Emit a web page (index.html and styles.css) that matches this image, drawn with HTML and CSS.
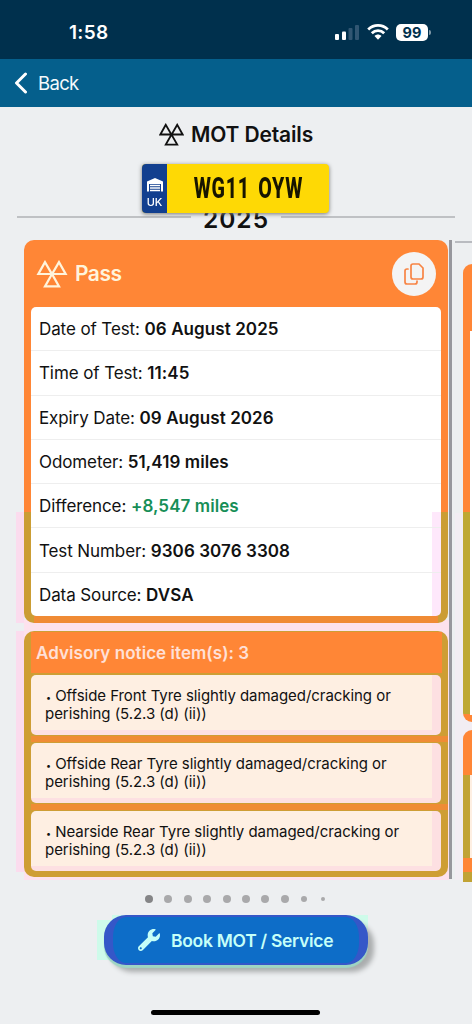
FILE: index.html
```html
<!DOCTYPE html>
<html lang="en">
<head>
<meta charset="utf-8">
<title>MOT Details</title>
<link rel="stylesheet" href="styles.css">
</head>
<body>
<svg class="defs" aria-hidden="true"><symbol id="mot" viewBox="0 0 24 22"><path d="M6.5 1.700 1.300 11H11.900ZM17.500 1.700 12.100 11H22.700ZM12 11 6.500 20.700H17.500Z" fill="none" stroke="currentColor" stroke-width="1.750"/></symbol></svg>
<div class="status">
  <span class="clock">1:58</span>
  <svg class="signal" viewBox="0 0 24 16"><g fill="#fff"><rect x="0" y="10" width="4" height="6" rx="1"/><rect x="7" y="7.500" width="4" height="8.500" rx="1"/></g><g fill="#315672"><rect x="13.500" y="4" width="4" height="12" rx="1"/><rect x="20" y="1" width="4" height="15" rx="1"/></g></svg>
  <svg class="wifi" viewBox="0 0 22 16"><g fill="none" stroke="#fff" stroke-width="2.800"><path d="M1.200 5.500C6.800.1 15.200.1 20.800 5.500"/><path d="M4.800 9.200c3.500-3.500 8.900-3.500 12.400 0"/></g><path d="M7.500 12.100c2-2 5-2 7 0L11 15.800Z" fill="#fff"/></svg>
  <span class="battery">99</span><span class="cap"></span>
</div>
<nav class="nav">
  <svg class="chevron" viewBox="0 0 14 22"><path d="M11.500 2 2.500 11l9 9" fill="none" stroke="#fff" stroke-width="3" stroke-linecap="round" stroke-linejoin="round"/></svg>
  <span>Back</span>
</nav>
<main>
  <h1 class="title"><svg><use href="#mot"/></svg><span>MOT Details</span></h1>
  <div class="plate">
    <div class="band"><svg viewBox="0 0 18 15"><path d="M1 14.500V4.500L9 1l8 3.500v10h-2V7H3v7.500Z" fill="#fff"/><path d="M4 8.500h10M4 11h10M4 13.500h10" stroke="#fff" stroke-width="1.300"/></svg><span>UK</span></div>
    <div class="reg"><span>WG11 OYW</span></div>
  </div>
  <div class="year"><span>2025</span></div>
  <div class="carousel">
    <div class="slide">
      <section class="card result">
        <header class="result-head"><svg><use href="#mot"/></svg><span class="pass">Pass</span>
          <span class="copy"><svg viewBox="0 0 22 24"><path d="M10 2h6l4 4v9q0 2-2 2h-8q-2 0-2-2V4q0-2 2-2Z M5 7H4Q2 7 2 9v11q0 2 2 2h8q2 0 2-2v-1" fill="none" stroke="#f78444" stroke-width="1.700" stroke-linecap="round"/></svg></span>
        </header>
        <div class="facts">
          <p><span>Date of Test: <b>06 August 2025</b></span></p>
          <p><span>Time of Test: <b>11:45</b></span></p>
          <p><span>Expiry Date: <b>09 August 2026</b></span></p>
          <p><span>Odometer: <b>51,419 miles</b></span></p>
          <p><span>Difference: <b class="green">+8,547 miles</b></span></p>
          <p><span>Test Number: <b>9306 3076 3308</b></span></p>
          <p><span>Data Source: <b>DVSA</b></span></p>
        </div>
      </section>
      <section class="card advisory">
        <h2>Advisory notice item(s): 3</h2>
        <div class="items">
          <p><i>•</i> Offside Front Tyre slightly damaged/cracking or<br>perishing (5.2.3 (d) (ii))</p>
          <p><i>•</i> Offside Rear Tyre slightly damaged/cracking or<br>perishing (5.2.3 (d) (ii))</p>
          <p><i>•</i> Nearside Rear Tyre slightly damaged/cracking or<br>perishing (5.2.3 (d) (ii))</p>
        </div>
      </section>
    </div>
    <div class="scrollbar"></div>
    <div class="next"><div class="next-card first"></div><div class="next-card second"></div></div>
  </div>
  <div class="dots"><i class="on"></i><i></i><i></i><i></i><i></i><i></i><i></i><i></i><i class="small"></i><i class="tiny"></i></div>
  <div class="book-wrap"><button class="book"><svg viewBox="0 0 512 512"><path fill="currentColor" d="M507.700 109.100c-2.200-9-13.500-12.100-20.100-5.500l-74.400 74.400-67.900-11.300L334 98.900l74.400-74.400c6.600-6.600 3.400-17.900-5.700-20.200-47.400-11.700-99.600.9-136.600 37.900-39.600 39.600-50.500 97.100-34.100 147.200L18.700 402.800c-25 25-25 65.500 0 90.500s65.500 25 90.500 0l213.200-213.200c50.100 16.700 107.500 5.700 147.400-34.200 37.100-37.100 49.700-89.300 37.900-136.800ZM64 472c-13.200 0-24-10.800-24-24s10.700-24 24-24 24 10.700 24 24-10.700 24-24 24Z"/></svg><span>Book MOT / Service</span></button></div>
  <div class="home"></div>
</main>
</body>
</html>
```
FILE: styles.css
```css
* { box-sizing: border-box; }
body { margin: 0; width: 472px; height: 1024px; overflow: hidden; background: #edeff1; font-family: Inter, Roboto, sans-serif; color: #111; display: flex; flex-direction: column; }
h1, h2, p { margin: 0; }
.defs { display: none; }
svg { display: block; flex: none; }
.status { height: 59px; flex: none; background: #00304d; color: #fff; display: flex; align-items: center; padding: 5px 42px 0 69px; }
.clock { font-size: 19px; font-weight: 600; letter-spacing: .3px; flex: 1; }
.signal { width: 24px; height: 16px; margin-right: 8px; }
.wifi { width: 22px; height: 16px; margin-right: 7px; }
.battery { width: 32px; height: 17px; border-radius: 5px; background: #fff; color: #00304d; font-size: 14.500px; line-height: 17px; font-weight: 700; text-align: center; }
.cap { width: 2px; height: 5px; background: #7f98a7; border-radius: 0 2px 2px 0; margin-left: 1px; margin-right: -1px; }
.nav { height: 48px; flex: none; background: #055f8c; color: #f4f9fc; display: flex; align-items: center; gap: 10px; padding-left: 14px; font-size: 18.500px; letter-spacing: -.65px; }
.chevron { width: 14px; height: 22px; }
main { flex: 1; display: flex; flex-direction: column; }
.title { height: 57px; padding: 0 0 2px 159px; display: flex; align-items: center; gap: 7px; font-size: 21px; font-weight: 600; letter-spacing: -.15px; }
.title svg { width: 25px; height: 23px; }
.plate { position: relative; z-index: 1; width: 187px; height: 49px; margin-left: 142px; flex: none; display: flex; border-radius: 4px; overflow: hidden; background: #fed905; filter: drop-shadow(0 1px 2px #777); }
.band { width: 25px; background: #123f8f; color: #fff; display: flex; flex-direction: column; align-items: center; justify-content: flex-end; gap: 4px; padding-bottom: 4px; font-size: 11px; line-height: 13px; font-weight: 500; }
.band svg { width: 18px; height: 15px; }
.reg { flex: 1; display: flex; align-items: center; justify-content: center; font: 800 29px/1 Roboto, sans-serif; color: #171500; }
.reg span { transform: scaleX(.68); white-space: nowrap; letter-spacing: 1px; word-spacing: 4px; }
.year { height: 27px; flex: none; display: flex; justify-content: center; background: linear-gradient(#bfc1c4, #bfc1c4) 17px 3px / 438px 2px no-repeat; }
.year span { width: 90px; background: #edeff1; text-align: center; font-size: 24.500px; font-weight: 600; line-height: 30px; margin-top: -9px; height: 27px; letter-spacing: 1px; }
.carousel { height: 642px; flex: none; display: flex; overflow: hidden; }
.slide { width: 449px; flex: none; padding: 0 1px 0 24px; display: flex; flex-direction: column; gap: 8px; background: linear-gradient(#fbdcee, #fbdcee) 16px 272px / 8px 111px no-repeat, linear-gradient(#fbdcee, #fbdcee) 16px 391px / 8px 241px no-repeat, linear-gradient(#fde2ed, #fde2ed) 24px 380px / 425px 260px no-repeat; }
.card { border-radius: 10px; overflow: hidden; flex: none; padding: 0 7px; }
.result { height: 383px; background: linear-gradient(#f08b35, #f08b35) 10px 376px / 404px 7px no-repeat, linear-gradient(#ff8636, #ff8636) 0 0 / 424px 272px no-repeat, #cb9d34; }
.result-head { height: 67px; display: flex; align-items: center; color: #fff4dc; padding: 0 5px; }
.result-head > svg { width: 32px; height: 28px; }
.pass { flex: 1; margin-left: 7px; font-size: 21px; font-weight: 600; letter-spacing: -.5px; }
.copy { width: 44px; height: 44px; border-radius: 50%; background: #f4f4f4; display: flex; align-items: center; justify-content: center; }
.copy svg { width: 22px; height: 24px; }
.facts { height: 309px; border-radius: 5px; background: linear-gradient(#fee8fb, #fee8fb) 401px 205px / 9px 104px no-repeat, #fff; display: grid; grid-template-rows: repeat(6, 44.300px) 1fr; overflow: hidden; }
.facts p { padding: 1px 0 0 8px; display: flex; align-items: center; border-bottom: 1px solid #eee; font-size: 17px; letter-spacing: -.1px; }
.facts p:last-child { border: 0; padding-top: 2px; }
.facts b { font-weight: 600; letter-spacing: .08px; }
.facts .green { color: #168e57; }
.advisory { height: 246px; background: linear-gradient(#ff8636, #ff8636) 7px 1px / 411px 41px no-repeat, linear-gradient(#ef8c35, #ef8c35) 7px 105px / 417px 6px no-repeat, linear-gradient(#ef8c35, #ef8c35) 7px 173px / 417px 6px no-repeat, #ce9e34; }
.advisory h2 { height: 44px; padding: 0 5px; font-size: 17px; line-height: 44px; font-weight: 600; color: #ffe0d7; letter-spacing: .05px; }
.items { display: flex; flex-direction: column; gap: 8px; }
.items p { height: 60px; padding: 12px 0 0 14px; border-radius: 5px; background: linear-gradient(#fde0e2, #fde0e2) 0 100% / 100% 5px no-repeat, linear-gradient(#fde0e2, #fde0e2) 401px 0 / 9px 60px no-repeat, #feefe2; font-size: 15px; line-height: 18px; letter-spacing: -.05px; white-space: nowrap; }
.items i { font-style: normal; font-size: 9px; line-height: 0; margin-left: 1px; }
.scrollbar { width: 3px; height: 639px; background: #97979d; flex: none; }
.next { flex: 1; margin-left: 3px; padding: 24px 0 0 8px; display: flex; flex-direction: column; gap: 8px; background: linear-gradient(#b9bbc0, #b9bbc0) 0 1px / 100% 2px no-repeat, linear-gradient(#f2edf3, #f2edf3) 0 273px / 100% 367px no-repeat; }
.next-card { background: #c3a433; flex: none; }
.first { height: 458px; border-radius: 10px 0 0 10px; background: linear-gradient(#fff, #fff) 7px 67px / 2px 384px no-repeat, linear-gradient(#ff8636, #ff8636) 0 0 / 100% 248px no-repeat, linear-gradient(#ff8636, #ff8636) 0 450px / 100% 8px no-repeat, #bea833; }
.second { height: 152px; border-radius: 10px 0 0; background: linear-gradient(#feefe2, #feefe2) 7px 45px / 2px 83px no-repeat, linear-gradient(#ff8636, #ff8636) 0 0 / 100% 45px no-repeat, linear-gradient(#ff8636, #ff8636) 0 128px / 100% 14px no-repeat, #c1a334; }
.dots { height: 33px; flex: none; display: flex; align-items: center; gap: 11.400px; padding-left: 145px; }
.dots i { width: 8px; height: 8px; border-radius: 50%; background: #a9a9ab; }
.dots .on { background: #858587; }
.dots .small { width: 6px; height: 6px; margin-left: 1px; }
.dots .tiny { width: 4px; height: 4px; margin-left: 2px; }
.book-wrap { margin-left: 97px; width: 271px; height: 53px; padding: 0 0 0 7px; flex: none; background: linear-gradient(#cefbea, #cefbea) 0 5px / 20px 40px no-repeat, linear-gradient(#cefbea, #cefbea) 15px 0 / 256px 16px no-repeat; }
.book { width: 264px; height: 50px; border: solid #3557c8; border-width: 2px 9px; border-radius: 22px; background: #0d6dc8; color: #c5fff8; display: flex; align-items: center; padding: 0 25px; gap: 11px; font: 600 17.500px Inter, sans-serif; letter-spacing: -.3px; white-space: nowrap; box-shadow: 0 3px 1px #9ed5c3, 6px 7px 5px #aaadae; }
.book svg { width: 22px; height: 22px; }
.home { width: 169px; height: 5px; border-radius: 3px; background: #000; margin: 42px 0 0 151px; }
```
